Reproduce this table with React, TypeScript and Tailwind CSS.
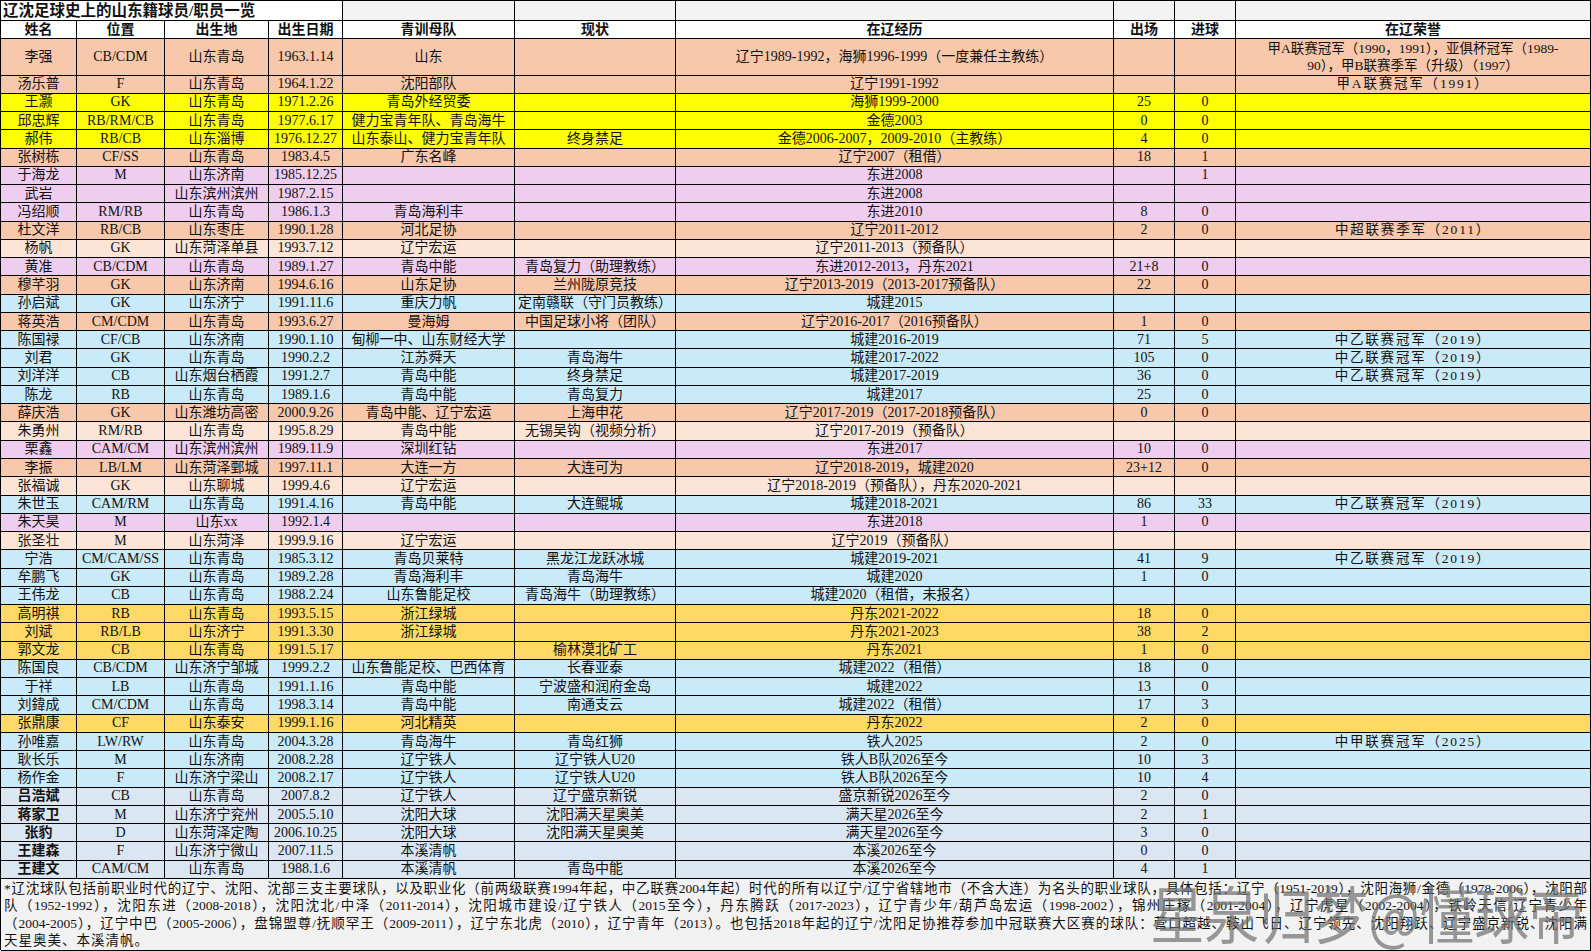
const COLS =
  "grid grid-cols-[76px_88px_104px_74px_172px_161px_438px_61px_61px_minmax(0,1fr)]";

const BG: Record<string, string> = {
  p: "bg-[#f7c8ab]",
  lp: "bg-[#fce4d6]",
  y: "bg-[#ffff00]",
  l: "bg-[#efcdef]",
  b: "bg-[#c9eaf9]",
  g: "bg-[#ffd966]",
  s: "bg-[#dbe6f3]",
};

type Row = [string, string, string, string, string, string, string, string, string, string, string];

const rows: Row[] = [
  ["李强", "CB/CDM", "山东青岛", "1963.1.14", "山东", "", "辽宁1989-1992，海狮1996-1999（一度兼任主教练）", "", "", "*", "p"],
  ["汤乐普", "F", "山东青岛", "1964.1.22", "沈阳部队", "", "辽宁1991-1992", "", "", "甲A联赛冠军（1991）", "p"],
  ["王灏", "GK", "山东青岛", "1971.2.26", "青岛外经贸委", "", "海狮1999-2000", "25", "0", "", "y"],
  ["邱忠辉", "RB/RM/CB", "山东青岛", "1977.6.17", "健力宝青年队、青岛海牛", "", "金德2003", "0", "0", "", "y"],
  ["郝伟", "RB/CB", "山东淄博", "1976.12.27", "山东泰山、健力宝青年队", "终身禁足", "金德2006-2007，2009-2010（主教练）", "4", "0", "", "y"],
  ["张树栋", "CF/SS", "山东青岛", "1983.4.5", "广东名峰", "", "辽宁2007（租借）", "18", "1", "", "p"],
  ["于海龙", "M", "山东济南", "1985.12.25", "", "", "东进2008", "", "1", "", "l"],
  ["武岩", "", "山东滨州滨州", "1987.2.15", "", "", "东进2008", "", "", "", "l"],
  ["冯绍顺", "RM/RB", "山东青岛", "1986.1.3", "青岛海利丰", "", "东进2010", "8", "0", "", "l"],
  ["杜文洋", "RB/CB", "山东枣庄", "1990.1.28", "河北足协", "", "辽宁2011-2012", "2", "0", "中超联赛季军（2011）", "p"],
  ["杨帆", "GK", "山东菏泽单县", "1993.7.12", "辽宁宏运", "", "辽宁2011-2013（预备队）", "", "", "", "lp"],
  ["黄准", "CB/CDM", "山东青岛", "1989.1.27", "青岛中能", "青岛复力（助理教练）", "东进2012-2013，丹东2021", "21+8", "0", "", "l"],
  ["穆芊羽", "GK", "山东济南", "1994.6.16", "山东足协", "兰州陇原竞技", "辽宁2013-2019（2013-2017预备队）", "22", "0", "", "p"],
  ["孙启斌", "GK", "山东济宁", "1991.11.6", "重庆力帆", "定南赣联（守门员教练）", "城建2015", "", "", "", "b"],
  ["蒋英浩", "CM/CDM", "山东青岛", "1993.6.27", "曼海姆", "中国足球小将（团队）", "辽宁2016-2017（2016预备队）", "1", "0", "", "p"],
  ["陈国禄", "CF/CB", "山东济南", "1990.1.10", "甸柳一中、山东财经大学", "", "城建2016-2019", "71", "5", "中乙联赛冠军（2019）", "b"],
  ["刘君", "GK", "山东青岛", "1990.2.2", "江苏舜天", "青岛海牛", "城建2017-2022", "105", "0", "中乙联赛冠军（2019）", "b"],
  ["刘洋洋", "CB", "山东烟台栖霞", "1991.2.7", "青岛中能", "终身禁足", "城建2017-2019", "36", "0", "中乙联赛冠军（2019）", "b"],
  ["陈龙", "RB", "山东青岛", "1989.1.6", "青岛中能", "青岛复力", "城建2017", "25", "0", "", "b"],
  ["薛庆浩", "GK", "山东潍坊高密", "2000.9.26", "青岛中能、辽宁宏运", "上海申花", "辽宁2017-2019（2017-2018预备队）", "0", "0", "", "p"],
  ["朱勇州", "RM/RB", "山东青岛", "1995.8.29", "青岛中能", "无锡吴钩（视频分析）", "辽宁2017-2019（预备队）", "", "", "", "lp"],
  ["栗鑫", "CAM/CM", "山东滨州滨州", "1989.11.9", "深圳红钻", "", "东进2017", "10", "0", "", "l"],
  ["李振", "LB/LM", "山东菏泽鄄城", "1997.11.1", "大连一方", "大连可为", "辽宁2018-2019，城建2020", "23+12", "0", "", "p"],
  ["张福诚", "GK", "山东聊城", "1999.4.6", "辽宁宏运", "", "辽宁2018-2019（预备队），丹东2020-2021", "", "", "", "lp"],
  ["朱世玉", "CAM/RM", "山东青岛", "1991.4.16", "青岛中能", "大连鲲城", "城建2018-2021", "86", "33", "中乙联赛冠军（2019）", "b"],
  ["朱天昊", "M", "山东xx", "1992.1.4", "", "", "东进2018", "1", "0", "", "l"],
  ["张圣壮", "M", "山东菏泽", "1999.9.16", "辽宁宏运", "", "辽宁2019（预备队）", "", "", "", "lp"],
  ["宁浩", "CM/CAM/SS", "山东青岛", "1985.3.12", "青岛贝莱特", "黑龙江龙跃冰城", "城建2019-2021", "41", "9", "中乙联赛冠军（2019）", "b"],
  ["牟鹏飞", "GK", "山东青岛", "1989.2.28", "青岛海利丰", "青岛海牛", "城建2020", "1", "0", "", "b"],
  ["王伟龙", "CB", "山东青岛", "1988.2.24", "山东鲁能足校", "青岛海牛（助理教练）", "城建2020（租借，未报名）", "", "", "", "b"],
  ["高明祺", "RB", "山东青岛", "1993.5.15", "浙江绿城", "", "丹东2021-2022", "18", "0", "", "g"],
  ["刘斌", "RB/LB", "山东济宁", "1991.3.30", "浙江绿城", "", "丹东2021-2023", "38", "2", "", "g"],
  ["郭文龙", "CB", "山东青岛", "1991.5.17", "", "榆林漠北矿工", "丹东2021", "1", "0", "", "g"],
  ["陈国良", "CB/CDM", "山东济宁邹城", "1999.2.2", "山东鲁能足校、巴西体育", "长春亚泰", "城建2022（租借）", "18", "0", "", "b"],
  ["于祥", "LB", "山东青岛", "1991.1.16", "青岛中能", "宁波盛和润府金岛", "城建2022", "13", "0", "", "b"],
  ["刘鍏成", "CM/CDM", "山东青岛", "1998.3.14", "青岛中能", "南通支云", "城建2022（租借）", "17", "3", "", "b"],
  ["张鼎康", "CF", "山东泰安", "1999.1.16", "河北精英", "", "丹东2022", "2", "0", "", "g"],
  ["孙唯嘉", "LW/RW", "山东青岛", "2004.3.28", "青岛海牛", "青岛红狮", "铁人2025", "2", "0", "中甲联赛冠军（2025）", "b"],
  ["耿长乐", "M", "山东济南", "2008.2.28", "辽宁铁人", "辽宁铁人U20", "铁人B队2026至今", "10", "3", "", "b"],
  ["杨作金", "F", "山东济宁梁山", "2008.2.17", "辽宁铁人", "辽宁铁人U20", "铁人B队2026至今", "10", "4", "", "b"],
  ["吕浩斌", "CB", "山东青岛", "2007.8.2", "辽宁铁人", "辽宁盛京新锐", "盛京新锐2026至今", "2", "0", "", "s"],
  ["蒋家卫", "M", "山东济宁兖州", "2005.5.10", "沈阳大球", "沈阳满天星奥美", "满天星2026至今", "2", "1", "", "s"],
  ["张豹", "D", "山东菏泽定陶", "2006.10.25", "沈阳大球", "沈阳满天星奥美", "满天星2026至今", "3", "0", "", "s"],
  ["王建森", "F", "山东济宁微山", "2007.11.5", "本溪清帆", "", "本溪2026至今", "0", "0", "", "s"],
  ["王建文", "CAM/CM", "山东青岛", "1988.1.6", "本溪清帆", "青岛中能", "本溪2026至今", "4", "1", "", "s"],
];

const headers = ["姓名", "位置", "出生地", "出生日期", "青训母队", "现状", "在辽经历", "出场", "进球", "在辽荣誉"];

const note = [
  "*辽沈球队包括前职业时代的辽宁、沈阳、沈部三支主要球队，以及职业化（前两级联赛1994年起，中乙联赛2004年起）时代的所有以辽宁/辽宁省辖地市（不含大连）为名头的职业球队，具体包括：辽宁（1951-2019），沈阳海狮/金德（1978-2006），沈阳部",
  "队（1952-1992），沈阳东进（2008-2018），沈阳沈北/中泽（2011-2014），沈阳城市建设/辽宁铁人（2015至今），丹东腾跃（2017-2023），辽宁青少年/葫芦岛宏运（1998-2002），锦州庄稼（2001-2004），辽宁虎星（2002-2004），铁岭天信/辽宁青少年",
  "（2004-2005），辽宁中巴（2005-2006），盘锦盟尊/抚顺罕王（2009-2011），辽宁东北虎（2010），辽宁青年（2013）。也包括2018年起的辽宁/沈阳足协推荐参加中冠联赛大区赛的球队：营口超越、鞍山飞日、辽宁领先、沈阳翔跃、辽宁盛京新锐、沈阳满",
];

function Cell({ children, className = "" }: { children?: React.ReactNode; className?: string }) {
  return (
    <div
      className={
        "flex items-center justify-center min-h-0 overflow-visible border-r border-b border-black whitespace-nowrap " +
        className
      }
    >
      {children}
    </div>
  );
}

export default function App() {
  return (
    <div
      className="relative w-[1591px] h-[951px] bg-white text-[#111] overflow-hidden leading-[16px]"
      style={{ fontFamily: '"Liberation Serif", "Noto Sans CJK SC", serif' }}
    >
      <div className="flex flex-col h-[950px] border-l border-t border-black">
        {/* title row */}
        <div className={COLS + " h-[20px] shrink-0 bg-[#f3f3f3]"}>
          <div className="col-span-4 flex items-center pl-[2px] border-r border-b border-black bg-white text-[15.5px] font-bold whitespace-nowrap">
            辽沈足球史上的山东籍球员/职员一览
          </div>
          {Array.from({ length: 6 }).map((_, i) => (
            <Cell key={i} />
          ))}
        </div>

        {/* header row */}
        <div className={COLS + " h-[18px] shrink-0 bg-white text-[14px] font-bold"}>
          {headers.map((h) => (
            <Cell key={h}>{h}</Cell>
          ))}
        </div>

        {/* data rows */}
        <div className="grid grid-rows-[2fr_repeat(44,minmax(0,1fr))] h-[840px] shrink-0 text-[14px]">
          {rows.map((r) => (
            <div key={r[0]} className={COLS + " min-h-0 " + BG[r[10]]}>
              <Cell className={r[10] === "s" ? "font-bold" : ""}>{r[0]}</Cell>
              <Cell>{r[1]}</Cell>
              <Cell>{r[2]}</Cell>
              <Cell>{r[3]}</Cell>
              <Cell>{r[4]}</Cell>
              <Cell>{r[5]}</Cell>
              <Cell>{r[6]}</Cell>
              <Cell>{r[7]}</Cell>
              <Cell>{r[8]}</Cell>
              {r[9] === "*" ? (
                <Cell className="text-[13.5px]">
                  <span className="text-center leading-[17px]">
                    甲A联赛冠军（1990，1991），亚俱杯冠军（1989-
                    <br />
                    90），甲B联赛季军（升级）（1997）
                  </span>
                </Cell>
              ) : (
                <Cell className="text-[13.5px] tracking-[1.8px]">{r[9]}</Cell>
              )}
            </div>
          ))}
        </div>

        {/* footnote */}
        <div className="flex-1 bg-[#f2f2f2] border-r border-b border-black px-[3px] pt-[1px] text-[13.5px] leading-[17.4px]">
          {note.map((line, i) => (
            <div key={i} className="text-justify [text-align-last:justify]">
              {line}
            </div>
          ))}
          <div className="tracking-[1px]">天星奥美、本溪清帆。</div>
        </div>
      </div>

      {/* watermark */}
      <div
        className="absolute left-[1150px] top-[874px] text-[62px] leading-[76px] text-[#707070] opacity-70 whitespace-nowrap scale-x-[0.88] origin-left"
        style={{ fontFamily: '"Noto Sans CJK SC", sans-serif' }}
      >
        星泉归梦@懂球帝
      </div>
    </div>
  );
}
